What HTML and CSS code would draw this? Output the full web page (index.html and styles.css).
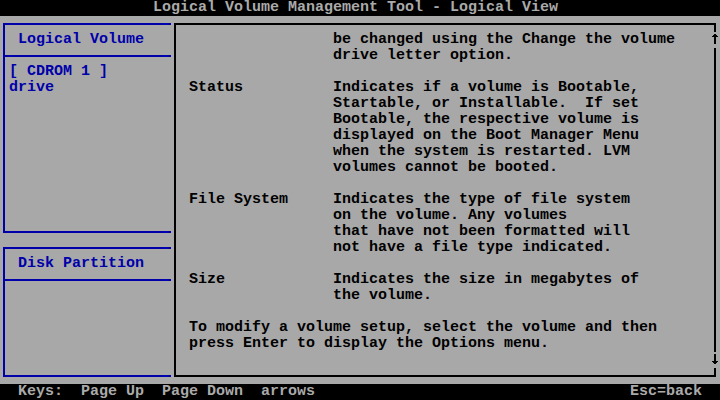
FILE: index.html
```html
<!DOCTYPE html>
<html lang="en">
<head>
<meta charset="utf-8">
<title>Logical Volume Management Tool</title>
<link rel="stylesheet" href="styles.css">
</head>
<body>
<div class="screen">
  <header class="titlebar">Logical Volume Management Tool - Logical View</header>

  <section class="panel lv">
    <h2 class="panel-title">Logical Volume</h2>
    <ul class="panel-list">
      <li>[ CDROM 1 ]</li>
      <li>drive</li>
    </ul>
  </section>

  <section class="panel dp">
    <h2 class="panel-title">Disk Partition</h2>
  </section>

  <section class="help">
    <div class="help-body">
      <dl class="defs">
        <dt></dt>
        <dd>be changed using the Change the volume<br>drive letter option.</dd>
        <dt>Status</dt>
        <dd>Indicates if a volume is Bootable,<br>Startable, or Installable.  If set<br>Bootable, the respective volume is<br>displayed on the Boot Manager Menu<br>when the system is restarted. LVM<br>volumes cannot be booted.</dd>
        <dt>File System</dt>
        <dd>Indicates the type of file system<br>on the volume. Any volumes<br>that have not been formatted will<br>not have a file type indicated.</dd>
        <dt>Size</dt>
        <dd>Indicates the size in megabytes of<br>the volume.</dd>
      </dl>
      <p class="note">To modify a volume setup, select the volume and then<br>press Enter to display the Options menu.</p>
    </div>
    <span class="scroll up"><svg width="9" height="16" viewBox="0 0 9 16" shape-rendering="crispEdges"><rect x="3" y="2" width="2" height="10"/><rect x="2" y="3" width="4" height="1"/><rect x="1" y="4" width="6" height="1"/></svg></span>
    <span class="scroll down"><svg width="9" height="16" viewBox="0 0 9 16" shape-rendering="crispEdges"><rect x="3" y="2" width="2" height="10"/><rect x="1" y="9" width="6" height="1"/><rect x="2" y="10" width="4" height="1"/></svg></span>
  </section>

  <footer class="keys">
    <span class="keys-list">Keys:  Page Up  Page Down  arrows</span>
    <span class="keys-esc">Esc=back</span>
  </footer>
</div>
</body>
</html>
```

FILE: styles.css
```css
* { box-sizing: border-box; }

html, body {
  margin: 0;
  padding: 0;
  background: #a8a8a8;
}

.screen {
  width: 720px;
  height: 400px;
  display: grid;
  grid-template-columns: repeat(80, 9px);
  grid-template-rows: repeat(25, 16px);
  background: #a8a8a8;
  color: #000;
  font-family: "Liberation Mono", "DejaVu Sans Mono", monospace;
  font-weight: bold;
  font-size: 15px;
  line-height: 16px;
  overflow: hidden;
}

.titlebar {
  grid-row: 1;
  grid-column: 1 / -1;
  background: #000;
  color: #aaaaaa;
  padding-left: 153px;
  white-space: pre;
}

.panel {
  grid-column: 1 / 20;
  padding-top: 16px;
  color: #0000aa;
  background-repeat: no-repeat;
}

.lv {
  grid-row: 2 / 16;
  background-image:
    linear-gradient(#0000aa, #0000aa),
    linear-gradient(#0000aa, #0000aa),
    linear-gradient(#0000aa, #0000aa),
    linear-gradient(#0000aa, #0000aa);
  background-position: 3px 7px, 3px 39px, 3px 215px, 3px 7px;
  background-size: 168px 2px, 168px 2px, 168px 2px, 2px 210px;
}

.dp {
  grid-row: 16 / 25;
  background-image:
    linear-gradient(#0000aa, #0000aa),
    linear-gradient(#0000aa, #0000aa),
    linear-gradient(#0000aa, #0000aa),
    linear-gradient(#0000aa, #0000aa);
  background-position: 3px 7px, 3px 39px, 3px 135px, 3px 7px;
  background-size: 168px 2px, 168px 2px, 168px 2px, 2px 130px;
}

.panel-title {
  margin: 0;
  font: inherit;
  padding-left: 18px;
  height: 16px;
}

.panel-list {
  list-style: none;
  margin: 16px 0 0 0;
  padding: 0 0 0 9px;
}

.panel-list li {
  white-space: pre;
  height: 16px;
}

.help {
  grid-row: 2 / 25;
  grid-column: 20 / 81;
  display: grid;
  grid-template-columns: 18px 522px 9px;
  grid-template-rows: repeat(23, 16px);
  background-repeat: no-repeat;
  background-image:
    linear-gradient(#000, #000),
    linear-gradient(#000, #000),
    linear-gradient(#000, #000),
    linear-gradient(#000, #000);
  background-position: 3px 7px, 3px 359px, 3px 7px, 543px 7px;
  background-size: 542px 2px, 542px 2px, 2px 354px, 2px 354px;
}

.help-body {
  grid-column: 2;
  grid-row: 2 / 23;
}

.defs {
  margin: 0;
  display: grid;
  grid-template-columns: 144px 1fr;
  row-gap: 16px;
}

.defs dt, .defs dd {
  margin: 0;
  white-space: pre;
}

.note {
  margin: 16px 0 0 0;
  white-space: pre;
}

.scroll {
  grid-column: 3;
  background: #a8a8a8;
  width: 9px;
  height: 16px;
}
.scroll svg { display: block; fill: #000; }
.scroll.up { grid-row: 2; }
.scroll.down { grid-row: 22; }

.keys {
  grid-row: 25;
  grid-column: 1 / -1;
  background: #000;
  color: #aaaaaa;
  display: flex;
  justify-content: space-between;
  padding: 0 18px;
  white-space: pre;
}
```
